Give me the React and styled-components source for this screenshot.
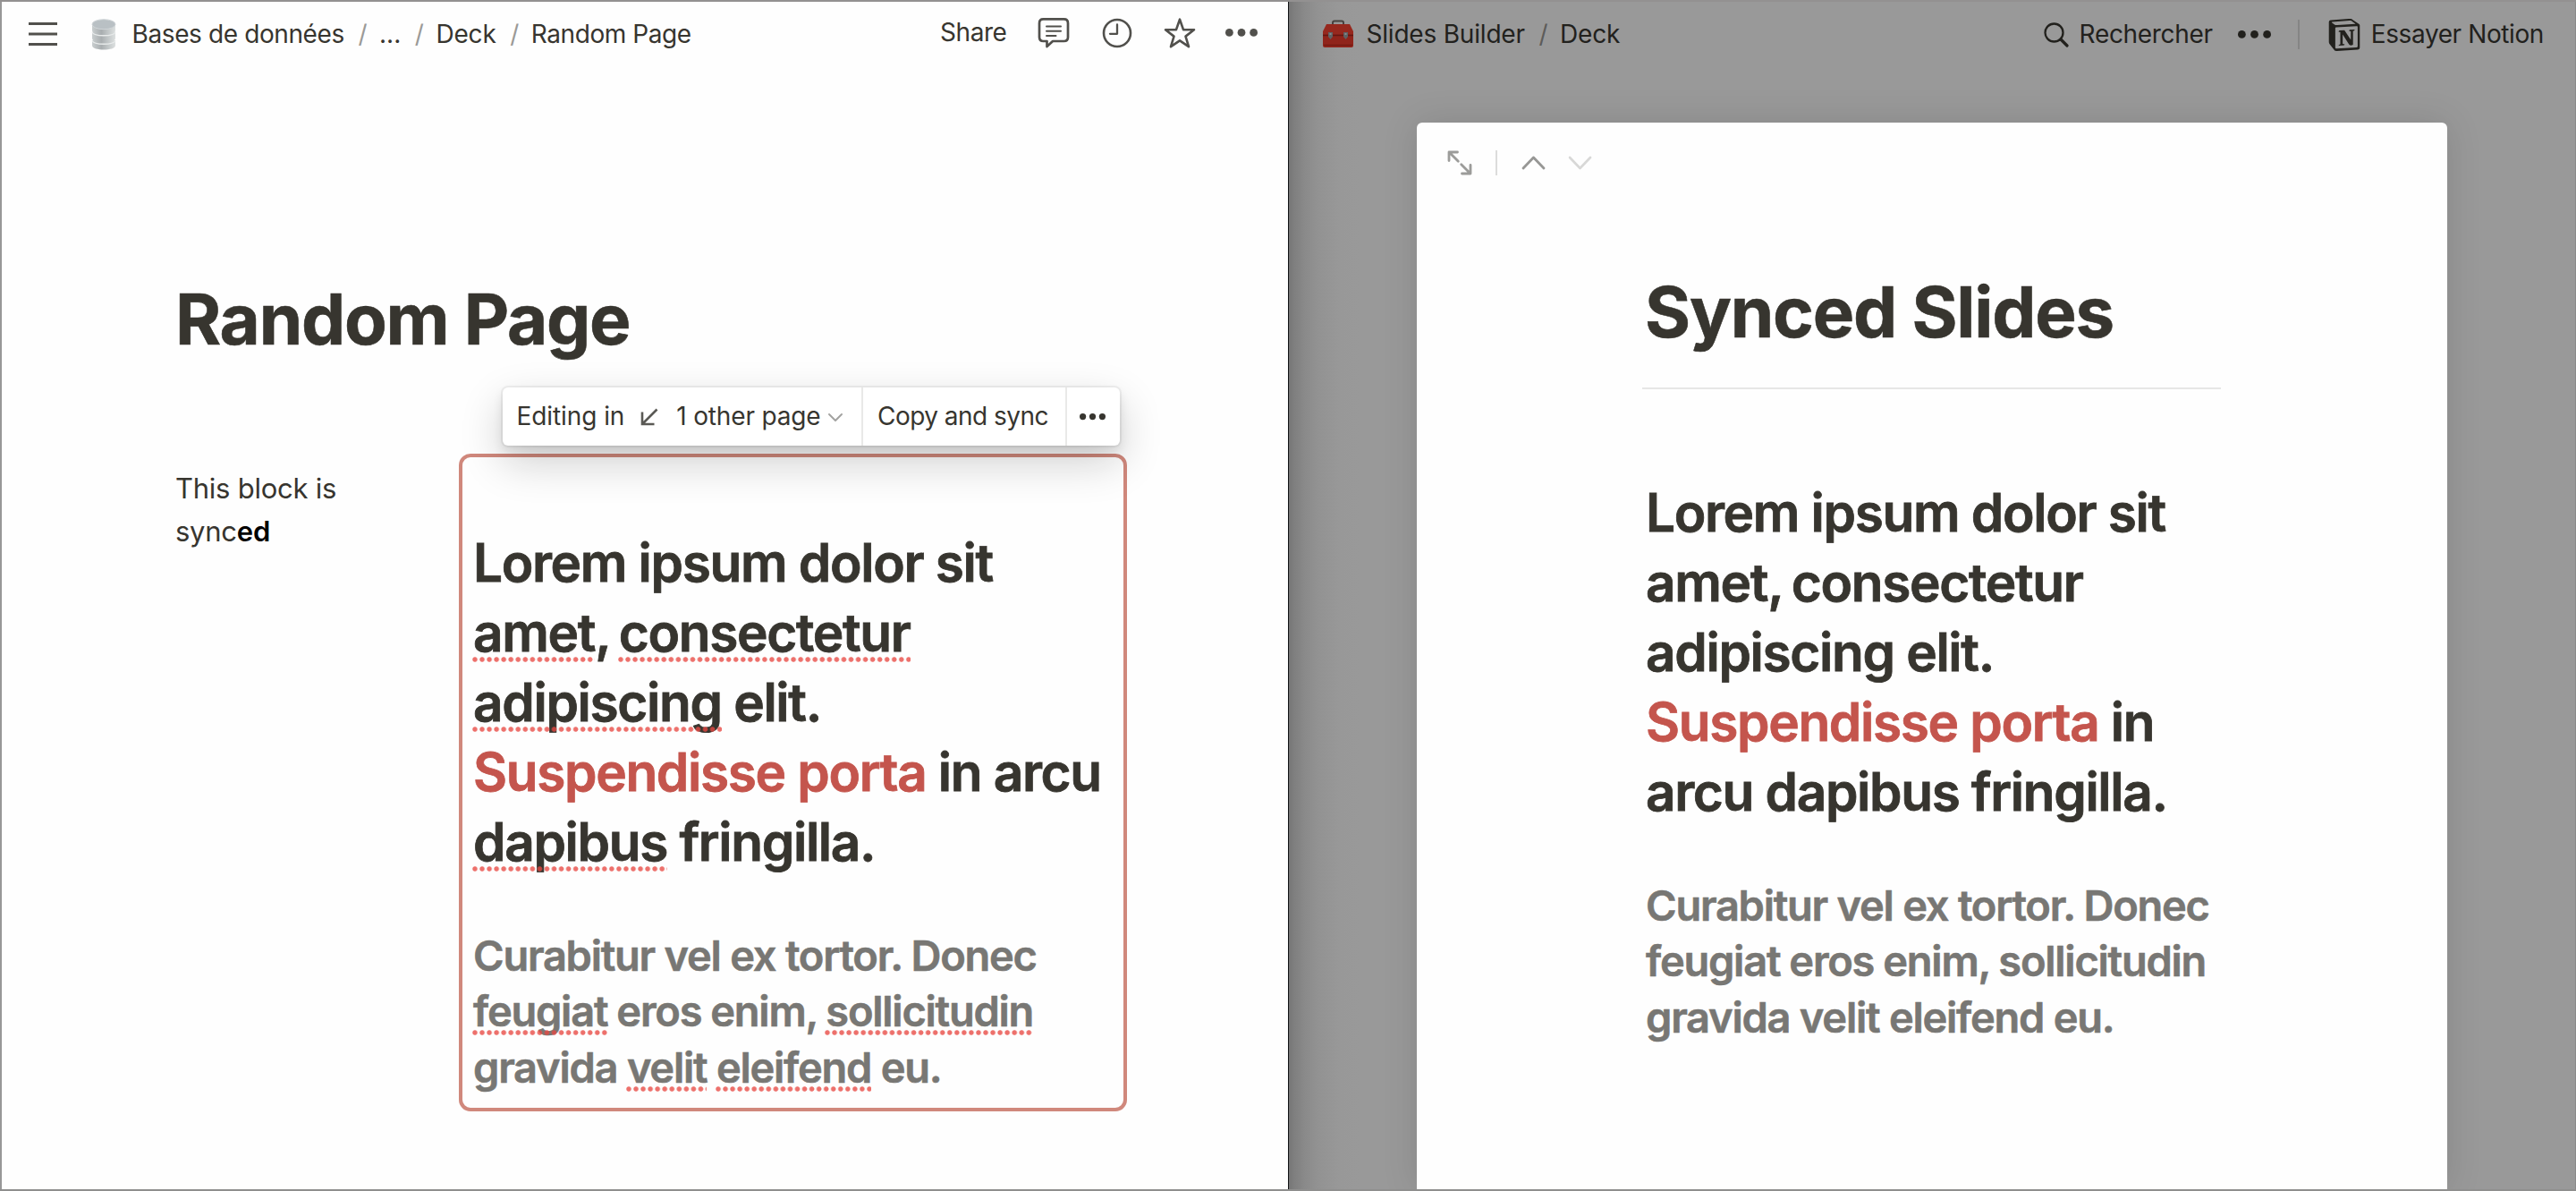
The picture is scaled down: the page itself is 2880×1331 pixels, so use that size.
import React from "react";
import styled, { createGlobalStyle } from "styled-components";
import { SiNotion } from "react-icons/si";

const INK = "#37352f";

const GlobalStyle = createGlobalStyle`
  *, *::before, *::after { box-sizing: border-box; }
  body { margin: 0; background: #fff; }
  h1, h2, h3, p { margin: 0; }
  svg { display: block; flex: none; }
`;

const Window = styled.div`
  display: grid;
  grid-template-columns: 1440px 1440px;
  width: 2880px;
  height: 1331px;
  overflow: hidden;
  border-top: 2px solid #939191;
  border-bottom: 2px solid #8f8f8e;
  font-family: Inter, "Liberation Sans", sans-serif;
  font-size: 28px;
  line-height: 1.2;
  color: ${INK};
  white-space: nowrap;
`;

const EditorPane = styled.section`
  border-left: 2px solid #979797;
  background: #fefefe;
`;

const PreviewPane = styled.section`
  display: flex;
  flex-direction: column;
  border-left: 1px solid #101214;
  border-right: 1px solid #8a8a8a;
  color: #22211d;
  background: linear-gradient(
      90deg,
      #767676 0,
      #7f7f7f 6px,
      #8a8a8a 18px,
      #929292 32px,
      #989898 56px,
      #999 80px
    );
`;

const TopBar = styled.header`
  display: flex;
  align-items: center;
  height: 72px;
  padding: 0 ${(p) => p.$right}px 0 ${(p) => p.$left}px;
`;

const Label = styled.span`
  letter-spacing: ${(p) => p.$track || 0}px;
`;

const Crumbs = styled.nav`
  display: flex;
  align-items: center;
  margin-left: ${(p) => p.$gap}px;
  padding-top: 1px;
`;

const Slash = styled.span`
  margin: 0 13.5px 0 15.6px;
  color: ${(p) => p.$tone};
`;

const Actions = styled.div`
  display: flex;
  align-items: center;
  margin-left: auto;
  padding-top: ${(p) => p.$drop || 0}px;
  margin-bottom: ${(p) => p.$lift || 0}px;
`;

const IconSlot = styled.span`
  display: flex;
  margin-left: ${(p) => p.$gap}px;
`;

const BarDivider = styled.span`
  width: 2px;
  height: 33px;
  margin: 0 32px 0 30px;
  background: #858585;
`;

const EditorBody = styled.div`
  padding: 235px 0 0 194px;
`;

const PageTitle = styled.h1`
  font-size: 78px;
  line-height: 96px;
  font-weight: 700;
  letter-spacing: ${(p) => p.$track}px;
  -webkit-text-stroke: 0.6px currentColor;
`;

const Columns = styled.div`
  display: flex;
  align-items: flex-start;
  margin-top: 102px;
`;

const Note = styled.p`
  width: 317px;
  padding: 15px 0 0;
  font-size: 31px;
  line-height: 48px;
  letter-spacing: -0.25px;
`;

const Strong = styled.strong`
  font-weight: 600;
  color: #000;
`;

const SyncedBlock = styled.div`
  position: relative;
  width: 747px;
  height: 735px;
  padding: 79px 0 0 12px;
  border: 4px solid #d0887c;
  border-radius: 13px;
`;

const BigHeading = styled.h2`
  font-size: 58.5px;
  line-height: 78px;
  font-weight: 600;
  letter-spacing: -1.34px;
  -webkit-text-stroke: 0.8px currentColor;
`;

const SmallHeading = styled.h3`
  margin-top: 57px;
  font-size: 47px;
  line-height: 62.4px;
  font-weight: 600;
  letter-spacing: -1.25px;
  color: #787774;
  -webkit-text-stroke: 0.6px currentColor;
`;

const Line = styled.div`
  word-spacing: ${(p) => p.$gap || 0}px;
`;

const Accent = styled.span`
  color: #c4554d;
`;

const Misspelled = styled.span`
  position: relative;
  &::after {
    content: "";
    position: absolute;
    left: -1px;
    right: 0;
    bottom: ${(p) => p.$drop}px;
    height: 6px;
    background: radial-gradient(circle at 3px 3px, rgba(232, 72, 66, 0.78) 2.3px, rgba(232, 72, 66, 0) 3.2px)
      0 0 / 8.05px 6px repeat-x;
  }
`;

const SyncMenu = styled.div`
  position: absolute;
  left: 45px;
  top: -78px;
  display: flex;
  width: 690px;
  height: 65px;
  border-radius: 6px;
  background: #fff;
  box-shadow: 0 0 0 2px rgba(15, 15, 15, 0.05), 0 6px 12px rgba(15, 15, 15, 0.1),
    0 18px 48px rgba(15, 15, 15, 0.2);
`;

const MenuPart = styled.div`
  display: flex;
  align-items: center;
  width: ${(p) => p.$width}px;
  padding: 1px 0 0 ${(p) => p.$pad}px;
  & + & {
    border-left: 2px solid #e9e9e8;
  }
`;

const Sheet = styled.article`
  flex: 1;
  margin: 63px 143px 0;
  border-radius: 6px 6px 0 0;
  background: #fefefe;
  color: ${INK};
  box-shadow: 0 0 40px rgba(15, 15, 15, 0.12);
`;

const SheetTools = styled.div`
  display: flex;
  align-items: center;
  height: 90px;
  padding-left: 34px;
`;

const ToolDivider = styled.span`
  width: 2px;
  height: 28px;
  margin-left: 26px;
  background: #dcdcdb;
`;

const SheetBody = styled.div`
  width: 647px;
  margin: 74px 0 0 252px;
`;

const Rule = styled.hr`
  height: 2px;
  margin: 36px 0 99px;
  border: 0;
  background: #e7e7e6;
`;

const Inset = styled.div`
  padding-left: ${(p) => p.$x}px;
`;

const MenuIcon = () => (
  <svg width="32" height="28" viewBox="0 0 32 28" stroke="#51504c" strokeWidth="3">
    <path d="M0 2.5H32M0 14H32M0 25.5H32" />
  </svg>
);

const DatabaseEmoji = () => (
  <svg width="28" height="35" viewBox="0 0 28 35">
    <defs>
      <linearGradient id="metal" x1="0" x2="1" y1="0" y2="0">
        <stop offset="0" stopColor="#c9cecf" />
        <stop offset="0.4" stopColor="#a9aeb0" />
        <stop offset="0.7" stopColor="#c3c8c9" />
        <stop offset="1" stopColor="#dde0e0" />
      </linearGradient>
    </defs>
    <path d="M1 24V30C1 36 27 36 27 30V24Z" fill="url(#metal)" />
    <path d="M1 24.5C3 29.500 25 29.500 27 24.500" fill="none" stroke="#e8ebeb" strokeWidth="1.300" />
    <path d="M1 14.500V22C1 28 27 28 27 22V14.500Z" fill="url(#metal)" />
    <path d="M1 15C3 20 25 20 27 15" fill="none" stroke="#e8ebeb" strokeWidth="1.300" />
    <path d="M1 6V13C1 19 27 19 27 13V6Z" fill="url(#metal)" />
    <ellipse cx="14" cy="6.200" rx="13" ry="5.500" fill="#b9c0c4" stroke="#d0d5d8" />
  </svg>
);

const ToolboxEmoji = () => (
  <svg width="34" height="32" viewBox="0 0 34 32">
    <path d="M11 6V3.500Q11 1.500 13 1.500H21Q23 1.500 23 3.500V6" fill="none" stroke="#47423f" strokeWidth="2" />
    <path d="M4 5H30L34 13V18H0V13Z" fill="#96281e" />
    <path d="M0 16H34V29Q34 31 32 31H2Q0 31 0 29Z" fill="#90241b" />
    <path d="M0 17.500H34" stroke="#651711" strokeWidth="1.600" />
    <path d="M1 28.500H33" stroke="#741a12" strokeWidth="1.400" />
    <path d="M6 14h5v5l-2.500 3L6 19zM23 14h5v5l-2.500 3L23 19z" fill="#5f6163" />
    <path d="M7.500 16h2M24.500 16h2" stroke="#93979a" strokeWidth="1.500" />
  </svg>
);

const CommentIcon = () => (
  <svg width="36" height="36" viewBox="0 0 36 36" fill="none" stroke="#51504c" strokeLinejoin="round" strokeLinecap="round">
    <path
      d="M6.500 2.400H29.500Q34 2.400 34 7V22.500Q34 27 29.500 27H17L10.500 33V27H6.500Q2 27 2 22.500V7Q2 2.400 6.500 2.400Z"
      strokeWidth="2.700"
    />
    <path d="M10 10.500H26M10 15.700H26M10 20.900H20.500" strokeWidth="2" />
  </svg>
);

const ClockIcon = () => (
  <svg width="34" height="34" viewBox="0 0 34 34" fill="none" stroke="#51504c" strokeWidth="2.600" strokeLinecap="round" strokeLinejoin="round">
    <circle cx="17" cy="17" r="15" />
    <path d="M17 7.500V17.800H9" strokeWidth="2.300" />
  </svg>
);

const StarIcon = () => (
  <svg width="36" height="36" viewBox="0 0 36 36" fill="none" stroke="#51504c" strokeWidth="2.600" strokeLinejoin="round">
    <path d="M18 2.700L22 14.100L34 14.300L24.500 21.600L28 33.200L18 26.400L8 33.200L11.500 21.600L2 14.300L14 14.100Z" />
  </svg>
);

const Dots = ({ width, r, color }) => (
  <svg width={width} height={r * 2} fill={color}>
    <circle cx={r} cy={r} r={r} />
    <circle cx={width / 2} cy={r} r={r} />
    <circle cx={width - r} cy={r} r={r} />
  </svg>
);

const SearchIcon = () => (
  <svg width="28" height="28" viewBox="0 0 28 28" fill="none" stroke="#22211d" strokeLinecap="round">
    <circle cx="11.500" cy="11.500" r="10" strokeWidth="2.300" />
    <path d="M19 19L26 26" strokeWidth="3.200" />
  </svg>
);

const SyncArrow = () => (
  <svg width="20" height="20" viewBox="0 0 20 20" fill="none" stroke="#5a5955" strokeWidth="2.600">
    <path d="M18.500 1.500L3 17M2 4.500V18H15.500" />
  </svg>
);

const Chevron = ({ width, height, up, color, weight }) => (
  <svg
    width={width}
    height={height}
    viewBox={`0 0 ${width} ${height}`}
    fill="none"
    stroke={color}
    strokeWidth={weight}
    strokeLinecap="round"
    strokeLinejoin="round"
  >
    <path
      d={
        up
          ? `M2 ${height - 2}L${width / 2} 2L${width - 2} ${height - 2}`
          : `M2 2L${width / 2} ${height - 2}L${width - 2} 2`
      }
    />
  </svg>
);

const ExpandIcon = () => (
  <svg width="28" height="28" viewBox="0 0 28 28" fill="none" stroke="#9c9c9a" strokeWidth="2.800" strokeLinecap="round" strokeLinejoin="round">
    <path d="M12.300 12.300L2.300 2.300M11.500 2H2V11.500M15.700 15.700L25.700 25.700M16.500 26H26V16.500" />
  </svg>
);

export default function App() {
  return (
    <Window>
      <GlobalStyle />
      <EditorPane>
        <TopBar $left={30} $right={34}>
          <MenuIcon />
          <Crumbs $gap={38}>
            <DatabaseEmoji />
            <IconSlot $gap={17.5}>
              <Label $track={-0.39}>Bases de données</Label>
            </IconSlot>
            <Slash $tone="#9b9a97">/</Slash>
            <Label>...</Label>
            <Slash $tone="#9b9a97">/</Slash>
            <Label $track={-0.18}>Deck</Label>
            <Slash $tone="#9b9a97">/</Slash>
            <Label $track={-0.43}>Random Page</Label>
          </Crumbs>
          <Actions $lift={3}>
            <Label $track={-0.45}>Share</Label>
            <IconSlot $gap={34}>
              <CommentIcon />
            </IconSlot>
            <IconSlot $gap={36}>
              <ClockIcon />
            </IconSlot>
            <IconSlot $gap={35.500}>
              <StarIcon />
            </IconSlot>
            <IconSlot $gap={33}>
              <Dots width={36} r={4.400} color="#51504c" />
            </IconSlot>
          </Actions>
        </TopBar>

        <EditorBody>
          <PageTitle $track={-1.24}>Random Page</PageTitle>
          <Columns>
            <Note>
              This block is
              <br />
              sync<Strong>ed</Strong>
            </Note>
            <SyncedBlock>
              <BigHeading>
                <Line>Lorem ipsum dolor sit</Line>
                <Line $gap={-3}>
                  <Misspelled $drop={2}>amet</Misspelled>, <Misspelled $drop={2}>consectetur</Misspelled>
                </Line>
                <Line>
                  <Misspelled $drop={2}>adipiscing</Misspelled> elit.
                </Line>
                <Line>
                  <Accent>Suspendisse porta</Accent> in arcu
                </Line>
                <Line>
                  <Misspelled $drop={2}>dapibus</Misspelled> fringilla.
                </Line>
              </BigHeading>
              <SmallHeading>
                <Line>Curabitur vel ex tortor. Donec</Line>
                <Line $gap={-0.5}>
                  <Misspelled $drop={1}>feugiat</Misspelled> eros enim, <Misspelled $drop={1}>sollicitudin</Misspelled>
                </Line>
                <Line>
                  gravida <Misspelled $drop={1}>velit</Misspelled> <Misspelled $drop={1}>eleifend</Misspelled> eu.
                </Line>
              </SmallHeading>
              <SyncMenu>
                <MenuPart $width={401} $pad={15.5}>
                  <Label $track={-0.08}>Editing in</Label>
                  <IconSlot $gap={18}>
                    <SyncArrow />
                  </IconSlot>
                  <IconSlot $gap={20}>
                    <Label $track={-0.17}>1 other page</Label>
                  </IconSlot>
                  <IconSlot $gap={8}>
                    <Chevron width={18} height={11} color="#a3a3a1" weight={2} />
                  </IconSlot>
                </MenuPart>
                <MenuPart $width={228} $pad={16}>
                  <Label $track={-0.52}>Copy and sync</Label>
                </MenuPart>
                <MenuPart $width={61} $pad={14}>
                  <Dots width={29} r={3.600} color={INK} />
                </MenuPart>
              </SyncMenu>
            </SyncedBlock>
          </Columns>
        </EditorBody>
      </EditorPane>

      <PreviewPane>
        <TopBar $left={38} $right={35}>
          <ToolboxEmoji />
          <Crumbs $gap={14.5}>
            <Label $track={-0.2}>Slides Builder</Label>
            <Slash $tone="#5d5c5a">/</Slash>
            <Label $track={-0.18}>Deck</Label>
          </Crumbs>
          <Actions $drop={1}>
            <SearchIcon />
            <IconSlot $gap={12}>
              <Label $track={-0.31}>Rechercher</Label>
            </IconSlot>
            <IconSlot $gap={28}>
              <Dots width={37} r={4.400} color="#22211d" />
            </IconSlot>
            <BarDivider />
            <SiNotion size={36} color="#22211d" />
            <IconSlot $gap={12}>
              <Label $track={-0.4}>Essayer Notion</Label>
            </IconSlot>
          </Actions>
        </TopBar>

        <Sheet>
          <SheetTools>
            <ExpandIcon />
            <ToolDivider />
            <IconSlot $gap={27}>
              <Chevron width={27} height={16} up color="#979795" weight={2.800} />
            </IconSlot>
            <IconSlot $gap={25}>
              <Chevron width={27} height={16} color="#d8d8d7" weight={2.600} />
            </IconSlot>
          </SheetTools>
          <SheetBody>
            <Inset $x={3}>
              <PageTitle $track={-1.17}>Synced Slides</PageTitle>
            </Inset>
            <Rule />
            <Inset $x={4}>
              <BigHeading>
                <Line>Lorem ipsum dolor sit</Line>
                <Line $gap={-3}>amet, consectetur</Line>
                <Line>adipiscing elit.</Line>
                <Line>
                  <Accent>Suspendisse porta</Accent> in
                </Line>
                <Line>arcu dapibus fringilla.</Line>
              </BigHeading>
              <SmallHeading>
                <Line>Curabitur vel ex tortor. Donec</Line>
                <Line $gap={-0.5}>feugiat eros enim, sollicitudin</Line>
                <Line>gravida velit eleifend eu.</Line>
              </SmallHeading>
            </Inset>
          </SheetBody>
        </Sheet>
      </PreviewPane>
    </Window>
  );
}
